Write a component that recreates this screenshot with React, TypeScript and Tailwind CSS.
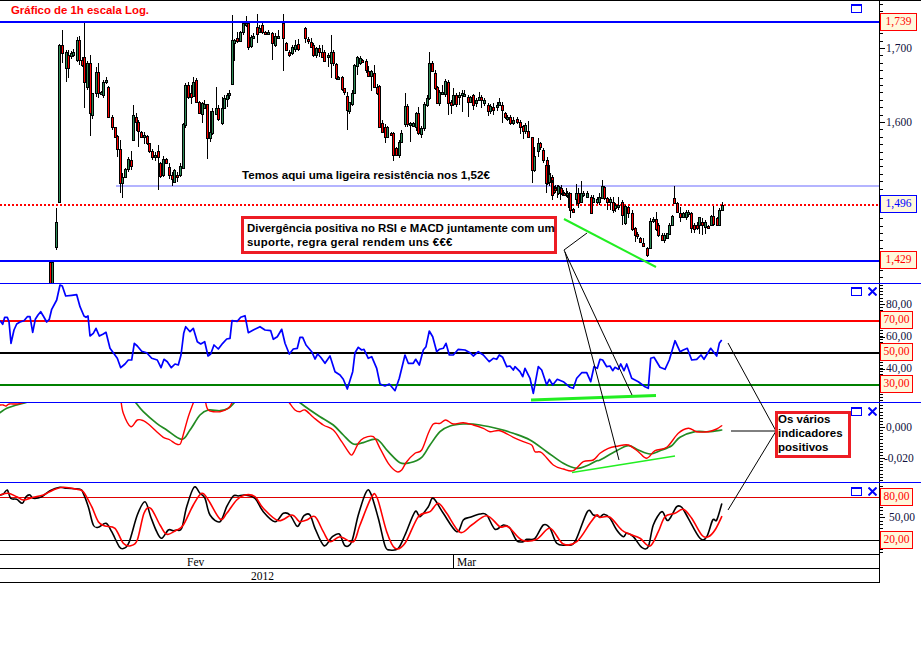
import type { ReactNode } from 'react';

type Candle = [number, number, number, 'r' | 'g', number?, number?];

const sans = "font-['Liberation_Sans',Arial,sans-serif]";
const serif = "font-['Liberation_Serif','Times_New_Roman',serif]";

// all coordinates below were read off 3x crops: x,y = origin + value / 3
const segA: Candle[] = [
  [178,135,606,'g'],[186,135,158,'r',90,190],[198,155,205,'g',150,245],[205,165,205,'r',150,235],[213,160,168,'g'],[220,155,165,'g'],
  [231,120,180,'g',110,185],[237,120,180,'r',108,195],[245,180,195,'r'],[253,170,245,'r',68,325],[262,190,262,'g'],[269,190,338,'r',165,408],
  [277,280,345,'g',280,358],[287,215,280,'g',200,292],[293,215,280,'r',190,295],[303,275,280,'g'],[310,245,285,'g'],[318,240,247,'g'],
  [325,262,350,'r'],[335,350,380,'r'],[344,382,412,'r',380,415],[352,408,448,'r',405,470],[359,448,548,'r',420,578],[367,530,548,'g',520,593],
  [376,508,532,'g'],[385,478,508,'g'],[392,480,498,'r',453,510],
  [400,345,420,'g',315,422],[408,352,365,'r',340,392],[415,365,392,'r',360,440],[424,395,412,'r'],[432,405,412,'g',395,432],[440,408,430,'r',405,435],
  [448,430,452,'r',428,458],[457,452,470,'r'],[465,465,470,'g',455,482],[475,452,472,'r',435,570],[480,490,528,'r',485,535],[490,478,524,'g'],
  [498,478,488,'r'],[507,500,525,'r',490,538],[515,525,538,'r',515,558],[523,510,545,'g'],[532,525,530,'r',515,545],[541,498,525,'g'],
  [549,372,505,'g'],[556,255,375,'g'],[565,255,290,'r'],[572,280,290,'r',255,312],[580,245,288,'g',232,290],[589,240,305,'r',235,310],
  [597,305,340,'r'],[605,310,342,'g',305,370],[613,312,325,'g',300,328],[622,312,415,'r',312,476],[630,395,415,'g',332,425],[637,333,398,'g'],
  [647,325,342,'g',262,345],[655,325,358,'r',315,362],[665,325,368,'g',290,375],[672,295,325,'g',285,325],[680,285,297,'g',280,322],[688,278,285,'g',270,297],
  [695,120,253,'g',45,255],[703,120,128,'g',118,182],[711,115,122,'r',95,128],[720,95,122,'g'],[728,68,95,'g'],[737,68,75,'g',48,80],
  [745,68,140,'r',65,150],[752,110,138,'g',105,145],[760,108,112,'g'],[770,82,102,'r',42,130],[778,85,95,'g',75,100],[787,75,95,'r',70,102],
  [795,95,102,'r'],[805,95,102,'g',90,105],[817,100,130,'r',95,180],[826,108,135,'g',100,140],[835,108,115,'g',90,118],[848,70,115,'r',42,212],
  [858,128,150,'r',125,152],[868,155,165,'r',150,172],[877,140,158,'g',135,165],[885,135,148,'g',120,155],[893,132,148,'r',118,152],
];

const segB: Candle[] = [
  [15,85,115,'r',80,130],[25,118,122,'r'],[32,125,140,'r',115,145],[40,135,165,'r',130,172],[48,145,165,'g',140,175],[57,145,157,'r',135,172],
  [65,155,170,'r',135,175],[73,155,183,'r',150,187],[83,165,170,'g',160,200],[92,157,190,'g',105,235],[100,157,190,'r'],[107,192,235,'r',190,240],
  [115,232,238,'g'],[125,232,268,'r',228,272],[133,265,275,'r',265,285],[140,288,330,'r',275,390],[148,305,332,'g',305,342],[157,280,312,'g'],
  [163,195,280,'g'],[172,172,197,'g',168,225],[180,175,188,'g',168,195],[187,180,185,'r'],[197,182,210,'r',178,218],[205,212,228,'r',198,232],
  [213,212,228,'g',210,272],[222,220,260,'r',195,262],[230,262,278,'r'],[238,258,380,'r'],[246,368,395,'r',360,398],[255,382,410,'r',372,428],
  [262,382,410,'g'],[272,398,405,'r',395,408],[280,398,465,'r',395,482],[288,445,465,'r'],[296,425,465,'g'],[304,398,425,'g',390,425],
  [314,318,372,'g',280,380],[320,318,372,'r'],[330,368,372,'g',365,425],[340,370,378,'g'],[348,338,380,'g',335,392],[355,338,400,'r',322,405],
  [363,385,402,'g',378,415],[372,312,385,'g'],[380,295,315,'g'],[386,190,295,'g',155,300],[395,190,212,'r',182,215],[404,220,265,'r'],
  [410,262,310,'r'],[418,275,310,'g'],[427,275,280,'g',255,285],[435,242,282,'g',238,290],[443,245,308,'r',240,345],[452,305,315,'r',300,342],
  [460,285,312,'g',265,318],[468,285,312,'r'],[476,285,292,'g',275,315],[485,280,285,'g',270,335],[493,282,286,'g',270,290],[503,290,305,'r',285,350],
  [511,290,305,'g'],[518,285,315,'r',282,330],[527,300,310,'g',295,322],[537,290,300,'g',275,302],[543,290,300,'r',285,325],[552,300,310,'g',295,318],
  [563,315,332,'r',310,348],[570,318,332,'g'],[580,320,330,'r',310,345],[590,315,322,'g',305,332],[597,305,315,'g',295,318],[607,315,330,'r',305,368],
  [615,338,352,'r',335,358],[622,350,355,'g'],[631,352,370,'r',345,375],[640,360,370,'g',352,375],[650,358,365,'r',352,372],[660,365,380,'r',360,402],
  [668,378,392,'r',375,418],[675,376,392,'g'],[685,392,412,'r',362,415],[695,412,510,'r',410,548],[703,468,510,'g',440,515],[714,428,452,'g',415,470],
  [720,428,442,'r',425,450],[730,450,480,'r'],[740,480,550,'r'],[748,520,545,'g',495,558],[755,530,580,'r',525,600],[763,568,575,'r'],[772,560,570,'g',555,595],
  [780,565,578,'g',560,600],[790,578,582,'g'],[798,578,582,'r',565,590],[808,580,622,'r',575,630],
];

const segC: Candle[] = [
  [18,15,70,'r',0,100],[28,42,65,'g',38,70],[35,65,105,'r',60,118],[44,85,90,'r',75,98],[55,78,100,'g',75,105],[62,85,100,'r'],[72,98,105,'r'],[80,98,105,'g'],
  [90,100,150,'r',98,175],[98,148,155,'r',145,160],[108,100,118,'g',72,135],[115,100,130,'r',85,145],[122,100,125,'g',62,128],[130,98,103,'g',92,110],
  [140,100,110,'g',92,115],[152,110,160,'r',105,162],[160,115,125,'g',105,128],[170,118,125,'g',112,132],[177,110,125,'g',100,135],[187,78,115,'g',60,118],
  [193,80,115,'r',78,120],[200,115,125,'r',110,150],[210,118,125,'g',110,150],[218,125,150,'r',110,158],[226,135,145,'g',128,155],[235,135,142,'g',110,150],
  [245,125,165,'r',120,195],[255,138,190,'g',135,195],[265,140,160,'r',138,175],[275,160,208,'r'],[285,205,225,'r',200,245],[292,222,228,'r'],[300,235,245,'r',232,248],
  [310,248,258,'r',235,262],[322,265,285,'r',262,292],[330,182,265,'g',175,268],[340,178,182,'g',172,190],[347,178,208,'r',155,212],[355,195,225,'r',190,230],
  [365,225,240,'r',220,242],[372,225,240,'g'],[380,220,235,'g',218,238],[388,195,222,'g',190,225],[397,168,195,'g',165,198],[403,115,128,'r',78,132],
  [410,128,155,'r'],[420,158,170,'r',140,185],[428,158,170,'g',155,175],[437,155,170,'g',150,180],[445,155,160,'g',150,172],[453,158,205,'r',155,220],
  [462,195,208,'r',190,218],[470,195,203,'r',185,210],[478,172,195,'g',170,222],[487,185,195,'r',175,225],[495,185,200,'g',180,222],[503,198,205,'r',195,208],
  [512,168,195,'g',165,198],[520,168,192,'r',138,198],[530,175,195,'r',170,198],[537,150,195,'g',145,198],[545,135,150,'g',127,152],
];

const zoomPts = (ox: number, oy: number, s: string) =>
  s.trim().split(/\s+/).map(p => {
    const [x, y] = p.split(',').map(Number);
    return `${(ox + x / 3).toFixed(1)},${(oy + y / 3).toFixed(1)}`;
  }).join(' ');

// catmull-rom through the read points, the indicator curves are smooth in the picture
const curve = (pts: string) => {
  const p = pts.split(' ').map(s => s.split(',').map(Number));
  let d = `M${p[0][0]} ${p[0][1]}`;
  for (let i = 0; i < p.length - 1; i++) {
    const a = p[Math.max(i - 1, 0)];
    const b = p[i];
    const c = p[i + 1];
    const e = p[Math.min(i + 2, p.length - 1)];
    const c1 = [b[0] + (c[0] - a[0]) / 6, b[1] + (c[1] - a[1]) / 6];
    const c2 = [c[0] - (e[0] - b[0]) / 6, c[1] - (e[1] - b[1]) / 6];
    d += `C${c1[0].toFixed(1)} ${c1[1].toFixed(1)} ${c2[0].toFixed(1)} ${c2[1].toFixed(1)} ${c[0]} ${c[1]}`;
  }
  return d;
};

const rsiLine = [
  zoomPts(0, 280, '0,122 8,133 14,112 22,112 27,125 33,190 42,150 50,132 60,126 72,122 82,110 90,110 98,157 106,118 114,105 122,95 130,108 140,126 148,118 155,88 170,60 180,15 187,18 197,48 215,46 230,44 240,80 252,108 258,112 264,108 270,168 280,160 288,145 298,168 310,162 318,157 330,205 340,218 352,235 362,263 375,252 385,240 395,240 403,190 412,198 425,214 440,218 455,235 472,240 483,263 492,238 502,245 514,263 525,252 535,255 543,225 551,160 557,140 570,155 580,145 592,185 602,192 614,185 624,228 632,222 642,195 655,207 668,190 680,177 690,175 696,122 712,124 722,112 735,107 745,158 760,150 780,140 795,150 812,152 820,178 832,170 845,148 855,190 868,222 880,207 892,205'),
  zoomPts(300, 280, '0,172 8,172 18,195 35,215 45,237 53,222 62,232 75,250 90,228 105,275 120,285 130,298 142,327 158,275 165,218 175,202 185,210 192,208 205,235 215,230 230,265 240,312 255,318 268,312 285,332 298,295 315,225 325,250 340,250 347,238 358,255 370,210 378,200 388,153 398,170 410,215 418,208 430,205 438,190 448,225 460,225 475,208 495,210 510,218 520,228 535,215 550,225 568,245 580,235 590,238 598,225 608,232 620,260 630,258 640,270 645,260 660,275 668,290 675,265 690,295 700,340 715,260 725,270 740,315 748,298 758,315 772,298 790,305 810,322 820,325 830,295 845,278 860,278 872,305 882,260 892,265'),
  zoomPts(600, 280, '0,238 8,240 20,260 30,258 38,272 45,262 55,268 62,252 72,272 80,252 95,295 115,305 135,320 145,325 152,235 162,232 180,262 195,268 208,240 225,182 240,215 250,210 262,205 275,240 290,238 303,225 312,238 332,205 350,228 358,190 365,180'),
].join(' ');

const macdRed = [
  zoomPts(0, 400, '0,15 10,15 18,18 28,12 50,12 70,8 90,-5'),
  zoomPts(0, 400, '362,-5 370,40 392,80 412,60 430,62 445,72 470,95 490,112 510,120 525,130 540,133 548,110 565,50 585,-5'),
  zoomPts(0, 400, '615,-5 625,30 660,35 685,25 695,10 700,-5'),
  zoomPts(0, 400, '868,8 885,30 900,35') + ' ' +
    zoomPts(300, 400, '15,30 40,52 70,75 100,90 125,125 150,162 160,160 175,130 190,115 220,110 240,145 265,190 290,215 305,210 320,185 345,160 365,150 385,100 400,72 420,70 437,60 460,72 490,68 520,75 550,85 570,95 600,92 640,112 670,125 695,135 705,155 725,158 760,195 790,207 820,212 850,185 880,180') + ' ' +
    zoomPts(600, 280, '0,520 25,505 55,498 85,495 115,515 140,535 165,512 200,502 235,460 265,445 290,455 325,455 350,447 365,437'),
];

const macdGreen = [
  zoomPts(0, 400, '0,38 20,25 50,15 85,5 100,-5'),
  zoomPts(0, 400, '405,5 430,35 470,70 500,90 545,118 570,90 600,45 625,30 660,32 685,25 705,5 712,-5'),
  zoomPts(300, 400, '-15,-5 0,8 30,30 60,50 100,75 130,105 160,132 190,128 230,118 265,155 300,188 330,188 365,172 390,135 420,95 450,78 490,72 540,75 600,88 640,100 690,120 740,155 790,190 830,205 860,197 890,182') + ' ' +
    zoomPts(600, 280, '0,540 50,512 85,497 115,510 150,522 180,512 215,497 240,472 285,455 325,455 365,450'),
];

const stochBlack = [
  zoomPts(0, 400, '0,285 10,282 22,270 32,295 50,298 67,310 78,290 90,285 100,295 125,290 150,272 180,262 200,265 240,268 250,280 265,320 280,375 295,382 318,370 335,395 358,440 372,445 388,425 412,345 435,305 452,350 470,395 485,415 505,390 520,392 530,390 545,385 560,320 582,262 600,280 615,295 630,345 660,365 680,320 700,288 715,288 735,285 765,295 790,335 825,365 850,340 870,345 890,378'),
  zoomPts(300, 400, '0,370 12,347 30,345 45,385 72,437 95,412 118,402 135,437 155,425 175,345 198,277 212,280 235,355 255,437 270,450 295,445 315,405 345,335 360,350 385,320 400,295 430,340 470,395 490,360 510,352 540,342 560,345 585,388 610,375 630,385 650,422 670,425 680,418 705,415 730,375 750,385 770,430 800,435 825,425 862,335 880,345 895,348'),
  zoomPts(600, 470, '0,142 12,133 30,145 50,180 70,200 80,190 100,200 125,232 145,230 160,165 185,125 200,150 210,145 230,110 245,112 265,145 300,205 320,200 338,150 350,150 365,102'),
].join(' ');

const stochRed = [
  zoomPts(0, 400, '0,285 25,280 50,290 70,300 100,292 130,285 160,270 190,262 230,268 250,275 275,320 295,365 315,378 345,385 370,430 392,437 412,420 432,340 452,325 480,375 500,403 530,390 550,375 580,315 605,280 625,300 660,357 680,340 710,300 735,285 765,290 790,325 835,362 875,345 895,362'),
  zoomPts(300, 400, '0,365 20,360 45,350 70,395 90,425 120,410 160,425 180,375 215,290 232,295 260,395 285,445 315,430 355,350 390,335 415,310 440,340 480,397 515,375 560,347 600,380 625,380 665,420 710,418 750,385 790,432 830,425 870,370 890,345'),
  zoomPts(600, 470, '0,142 30,142 65,180 90,193 120,205 150,228 175,185 195,140 225,130 250,118 275,145 305,195 325,200 345,180 365,140'),
].join(' ');

function Candles({ data, ox, oy }: { data: Candle[]; ox: number; oy: number }) {
  const boxes = data.map(([x, t, b]) => ({
    px: Math.round(ox + x / 3),
    top: Math.round(oy + t / 3),
    bot: Math.round(oy + b / 3),
  }));
  return (
    <g shapeRendering="crispEdges">
      {data.map(([, , , , wt, wb], i) => {
        const { px, top, bot } = boxes[i];
        const up = wt !== undefined ? oy + wt / 3 : top - 1 - (i * 7) % 3;
        const down = wb !== undefined ? oy + wb / 3 : bot + 1 + (i * 5) % 3;
        return (
          <g key={i}>
            <rect x={px} y={up} width={1} height={down - up} fill="#000" />
            <rect x={px - 1} y={top} width={3} height={Math.max(bot - top, 2) + 1} fill="#000" />
          </g>
        );
      })}
      {/* colour goes on in a second pass so the neighbour's outline does not cover it */}
      {data.map(([, , , c], i) => {
        const { px, top, bot } = boxes[i];
        return <rect key={i} x={px} y={top + 1} width={1} height={Math.max(bot - top - 1, 1)} fill={c === 'r' ? '#ff0000' : '#2e8b57'} />;
      })}
    </g>
  );
}

function PaneChart({ y, h, children }: { y: number; h: number; children: ReactNode }) {
  return (
    <svg width={879} height={h} viewBox={`0 ${y} 879 ${h}`} className="block shrink-0">
      {children}
    </svg>
  );
}

function HLine({ y, color, w = 2 }: { y: number; color: string; w?: number }) {
  return <line x1={0} x2={879} y1={y} y2={y} stroke={color} strokeWidth={w} shapeRendering="crispEdges" />;
}

function Smooth({ pts, color, w = 1.6 }: { pts: string; color: string; w?: number }) {
  return <path d={curve(pts)} fill="none" stroke={color} strokeWidth={w} strokeLinejoin="round" strokeLinecap="round" />;
}

function PaneIcons({ className, close = true }: { className: string; close?: boolean }) {
  return (
    <div className={`absolute left-[851px] flex items-center gap-[6px] ${className}`}>
      <div className="h-[9px] w-[11px] border-[1.5px] border-t-2 border-[#0000ff]" />
      {close && (
        <svg width={9} height={9} viewBox="0 0 9 9">
          <path d="M0.5 0.5 L8.5 8.5 M8.5 0.5 L0.5 8.5" stroke="#0000ff" strokeWidth={2} />
        </svg>
      )}
    </div>
  );
}

function Ticks({ y, h, major, step, count }: { y: number; h: number; major: number[]; step: number; count: number }) {
  const start = major[0] - Math.floor((major[0] - y) / step) * step;
  return (
    <svg width={41} height={h} viewBox={`0 ${y} 41 ${h}`} className="absolute left-0 top-0">
      <g shapeRendering="crispEdges" fill="#000">
        {Array.from({ length: count }, (_, i) => (
          <rect key={i} x={0} y={Math.round(start + i * step)} width={3} height={1} />
        ))}
        {major.map(m => (
          <rect key={m} x={0} y={m} width={5} height={1} />
        ))}
      </g>
    </svg>
  );
}

function AxisText({ children, className = 'pl-[6px]' }: { children: ReactNode; className?: string }) {
  return (
    <span className={`${serif} relative block h-[14px] shrink-0 text-[11.5px] leading-[14px] text-[#10103c] ${className}`}>
      {children}
    </span>
  );
}

function AxisBox({ children, blue, wide }: { children: ReactNode; blue?: boolean; wide?: boolean }) {
  return (
    <div
      className={`${serif} relative flex h-[18px] shrink-0 items-center justify-center border bg-[#fff8dc] text-[11.5px] ${wide ? 'w-[37px]' : 'w-[33px]'} ${
        blue ? 'border-[#0000ff] text-[#0000ff]' : 'border-[#ff0000] text-[#ff0000]'
      }`}
    >
      {children}
    </div>
  );
}

export default function App() {
  return (
    <div className="relative h-[657px] w-[921px] overflow-hidden bg-white">
      <div className="flex w-[921px] flex-col border-t border-black">
        {/* Price pane */}
        <div className="relative flex h-[283px] border-b border-[#0000ff]">
          <PaneChart y={1} h={282}>
            <line x1={116} x2={879} y1={186} y2={186} stroke="#b4b4ff" strokeWidth={2} shapeRendering="crispEdges" />
            <line x1={0} x2={879} y1={205} y2={205} stroke="#ff0000" strokeWidth={2} strokeDasharray="2 2" shapeRendering="crispEdges" />
            <Candles data={[[156,786,850,'g',786,850],[168,666,740,'g',624,750],[150,786,850,'r',786,850]]} ox={0} oy={0} />
            <Candles data={segA} ox={0} oy={0} />
            <Candles data={segB} ox={300} oy={0} />
            <Candles data={segC} ox={540} oy={160} />
            <HLine y={22} color="#0000ff" />
            <HLine y={261} color="#0000ff" />
          </PaneChart>
          <div className="relative flex w-[42px] flex-col border-l border-black pt-[12px]">
            <Ticks y={1} h={282} major={[48, 122]} step={7.4} count={40} />
            <AxisBox wide>1,739</AxisBox>
            <div className="h-[10px] shrink-0" />
            <AxisText>1,700</AxisText>
            <div className="h-[60px] shrink-0" />
            <AxisText>1,600</AxisText>
            <div className="h-[66px] shrink-0" />
            <AxisBox wide blue>1,496</AxisBox>
            <div className="h-[38px] shrink-0" />
            <AxisBox wide>1,429</AxisBox>
          </div>
          <PaneIcons className="top-[3px]" close={false} />
          <span className={`${sans} absolute left-[11px] top-[1px] text-[11.4px] font-bold leading-[16px] text-[#ff0000]`}>
            Gráfico de 1h escala Log.
          </span>
          <span className={`${sans} absolute left-[242px] top-[166px] text-[11.6px] font-bold leading-[16px] text-black`}>
            Temos aqui uma ligeira resistência nos 1,52€
          </span>
        </div>

        {/* RSI pane */}
        <div className="relative flex h-[119px] border-b border-[#0000ff]">
          <PaneChart y={284} h={118}>
            <HLine y={321} color="#ff0000" />
            <HLine y={353} color="#000" />
            <HLine y={385} color="#008000" />
            <polyline points={rsiLine} fill="none" stroke="#0000ff" strokeWidth={1.7} strokeLinejoin="round" />
          </PaneChart>
          <div className="relative grid w-[42px] auto-rows-[16px] items-center border-l border-black pt-[12px]">
            <Ticks y={284} h={118} major={[304, 337, 369]} step={3.2} count={37} />
            <AxisText>80,00</AxisText>
            <AxisBox>70,00</AxisBox>
            <AxisText>60,00</AxisText>
            <AxisBox>50,00</AxisBox>
            <AxisText>40,00</AxisText>
            <AxisBox>30,00</AxisBox>
          </div>
          <PaneIcons className="top-[3px]" />
        </div>

        {/* MACD pane */}
        <div className="relative flex h-[80px] border-b border-[#0000ff]">
          <PaneChart y={403} h={79}>
            {macdGreen.map((p, i) => <Smooth key={i} pts={p} color="#228b22" w={1.7} />)}
            {macdRed.map((p, i) => <Smooth key={i} pts={p} color="#ff0000" w={1.4} />)}
          </PaneChart>
          <div className="relative flex w-[42px] flex-col gap-[17px] border-l border-black pt-[17px]">
            <Ticks y={403} h={79} major={[427, 458]} step={3.1} count={26} />
            <AxisText>0,000</AxisText>
            <AxisText className="pl-[4px]">-0,020</AxisText>
          </div>
          <PaneIcons className="top-[4px]" />
        </div>

        {/* Stochastic pane */}
        <div className="relative flex h-[71px]">
          <PaneChart y={483} h={71}>
            <HLine y={497} color="#e00000" w={1} />
            <HLine y={540} color="#000" w={1} />
            <Smooth pts={stochBlack} color="#000" />
            <Smooth pts={stochRed} color="#ff0000" />
          </PaneChart>
          <div className="relative flex w-[42px] flex-col border-l border-black pt-[5px]">
            <Ticks y={483} h={71} major={[517]} step={3.5} count={20} />
            <AxisBox>80,00</AxisBox>
            <div className="h-[4px] shrink-0" />
            <AxisText className="pl-[9px]">50,00</AxisText>
            <div className="h-[7px] shrink-0" />
            <AxisBox>20,00</AxisBox>
          </div>
          <PaneIcons className="top-[4px]" />
        </div>

        {/* Time axis */}
        <div className="flex w-[880px] flex-col border-r border-black">
          <div className={`${serif} flex h-[15px] items-center border-y border-black text-[11.5px] leading-none text-black`}>
            <span className="w-[187px]" />
            <span className="w-[266px] pt-[2px]">Fev</span>
            <span className="h-full border-l border-black pl-[3px] pt-[2px]">Mar</span>
          </div>
          <div className={`${serif} flex h-[14px] items-center border-b border-black pl-[251px] pt-[2px] text-[11.5px] leading-none text-black`}>
            2012
          </div>
        </div>
      </div>

      {/* Hand drawn trend lines and notes */}
      <svg width={921} height={657} viewBox="0 0 921 657" className="pointer-events-none absolute left-0 top-0">
        <g stroke="#22ee22" fill="none">
          <line x1={564} y1={219} x2={656} y2={267} strokeWidth={2} />
          <line x1={531} y1={400} x2={656} y2={395.5} strokeWidth={3} />
          <line x1={572} y1={472.5} x2={675} y2={456} strokeWidth={1.6} />
        </g>
        <g stroke="#000" strokeWidth={1} fill="none">
          <polyline points="587,233 564,250 632,395" />
          <line x1={565} y1={252} x2={619} y2={460} />
          <line x1={728} y1={343} x2={776} y2={431} />
          <line x1={731} y1={431} x2={776} y2={431} />
          <line x1={728} y1={510} x2={776} y2={431} />
        </g>
      </svg>

      <div className={`${sans} absolute left-[241px] top-[216px] h-[38px] w-[316px] whitespace-nowrap border-[3px] border-[#ed1c24] bg-white pl-[3px] pt-[2px] text-[11.4px] font-bold leading-[14px] text-black`}>
        Divergência positiva no RSI e MACD juntamente com um
        <br />
        <span className="tracking-[0.25px]">suporte, regra geral rendem uns €€€</span>
      </div>
      <div className={`${sans} absolute left-[775px] top-[411px] h-[47px] w-[76px] border-[3px] border-[#ed1c24] bg-white text-[11.5px] font-bold leading-[14px] text-black`}>
        <div className="-mt-[2px]">
          Os vários
          <br />
          indicadores
          <br />
          positivos
        </div>
      </div>
    </div>
  );
}
